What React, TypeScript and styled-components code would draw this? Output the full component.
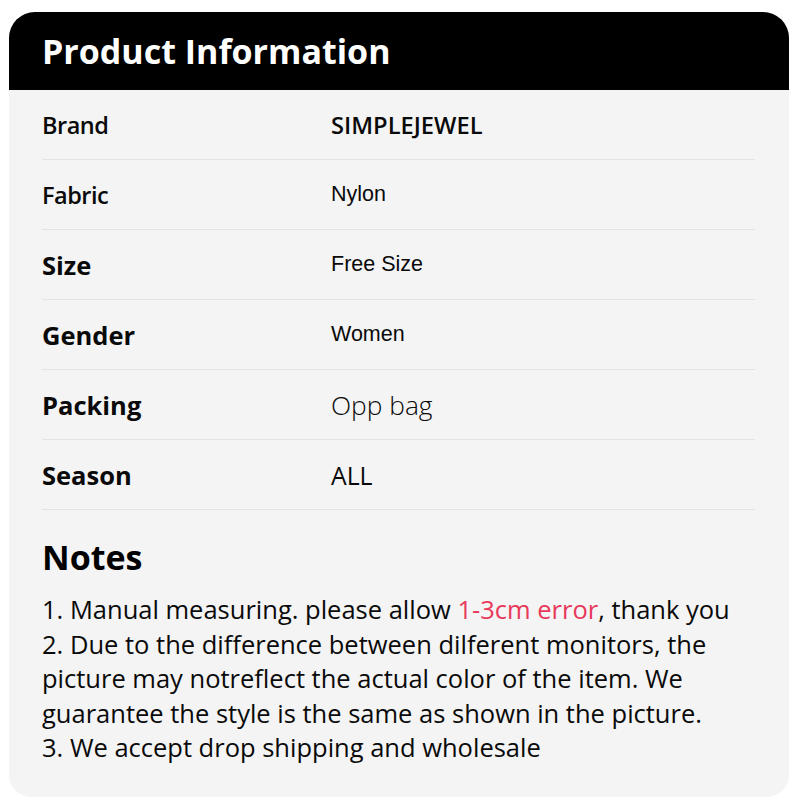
import React from "react";
import styled, { createGlobalStyle } from "styled-components";

// Product information card - spec table plus notes
const GlobalStyle = createGlobalStyle`
  html, body {
    margin: 0;
    padding: 0;
    background: #ffffff;
  }
  body {
    font-family: "Open Sans", "Noto Sans", sans-serif;
    color: #111111;
  }
`;

const rows = [
  { label: "Brand", semi: true, value: "SIMPLEJEWEL", kind: "brand" },
  { label: "Fabric", semi: true, value: "Nylon", kind: "plain" },
  { label: "Size", semi: false, value: "Free Size", kind: "plain" },
  { label: "Gender", semi: false, value: "Women", kind: "plain" },
  { label: "Packing", semi: false, value: "Opp bag", kind: "light" },
  { label: "Season", semi: false, value: "ALL", kind: "caps" },
] as const;

type ValueKind = (typeof rows)[number]["kind"];

const App = () => {
  return (
    <>
      <GlobalStyle />
      <Card>
        <Header>
          <Title>Product Information</Title>
        </Header>
        <Table>
          {rows.map((row) => (
            <Row key={row.label}>
              <Label $semi={row.semi}>{row.label}</Label>
              <Value $kind={row.kind}>{row.value}</Value>
            </Row>
          ))}
        </Table>
        <Notes>
          <NotesTitle>Notes</NotesTitle>
          <NotesText>
            1. Manual measuring. please allow <Highlight>1-3cm error</Highlight>, thank you
            <br />
            2. Due to the difference between dilferent monitors, the picture may notreflect the
            actual color of the item. We guarantee the style is the same as shown in the picture.
            <br />
            3. We accept drop shipping and wholesale
          </NotesText>
        </Notes>
      </Card>
    </>
  );
};

const Card = styled.div`
  width: 780px;
  height: 785px;
  margin: 12px 0 0 9px;
  background: #f4f4f4;
  border-radius: 26px 26px 22px 22px;
  overflow: hidden;
  display: flex;
  flex-direction: column;
`;

const Header = styled.div`
  height: 78px;
  background: #000000;
  display: flex;
  align-items: center;
  padding: 0 33px;
`;

const Title = styled.h1`
  margin: 0;
  color: #ffffff;
  font-family: "Open Sans", sans-serif;
  font-weight: 700;
  font-size: 34px;
  line-height: 1;
`;

const Table = styled.div`
  padding: 0 34px 0 33px;
`;

const Row = styled.div`
  height: 69px;
  display: grid;
  grid-template-columns: 289px 1fr;
  align-items: center;
  border-bottom: 1px solid #e3e3e3;
`;

// Brand / Fabric use a tighter semibold face than the other labels
const Label = styled.span<{ $semi: boolean }>`
  font-family: "Open Sans", sans-serif;
  font-weight: ${({ $semi }) => ($semi ? 600 : 700)};
  font-size: ${({ $semi }) => ($semi ? "23.5px" : "25.5px")};
  letter-spacing: ${({ $semi }) => ($semi ? "-0.5px" : "0")};
  color: #0a0a0a;
`;

const valueStyles: Record<ValueKind, string> = {
  brand: `font-family: "Open Sans", sans-serif; font-weight: 600; font-size: 23.7px;`,
  plain: `font-family: "Liberation Sans", Arial, sans-serif; font-weight: 400; font-size: 21.5px;`,
  light: `font-family: "Open Sans", sans-serif; font-weight: 300; font-size: 26.3px;`,
  caps: `font-family: "Open Sans", sans-serif; font-weight: 400; font-size: 24.8px;`,
};

const Value = styled.span<{ $kind: ValueKind }>`
  color: #0a0a0a;
  ${({ $kind }) => valueStyles[$kind]}
`;

const Notes = styled.div`
  padding: 27px 34px 0 33px;
`;

const NotesTitle = styled.h2`
  margin: 0 0 15px;
  font-family: "Open Sans", sans-serif;
  font-weight: 700;
  font-size: 34px;
  line-height: 40px;
  color: #000000;
`;

const NotesText = styled.p`
  margin: 0;
  font-family: "Open Sans", sans-serif;
  font-weight: 400;
  font-size: 25.5px;
  line-height: 34.5px;
  color: #0a0a0a;
`;

const Highlight = styled.span`
  color: #e8395a;
`;

export default App;
